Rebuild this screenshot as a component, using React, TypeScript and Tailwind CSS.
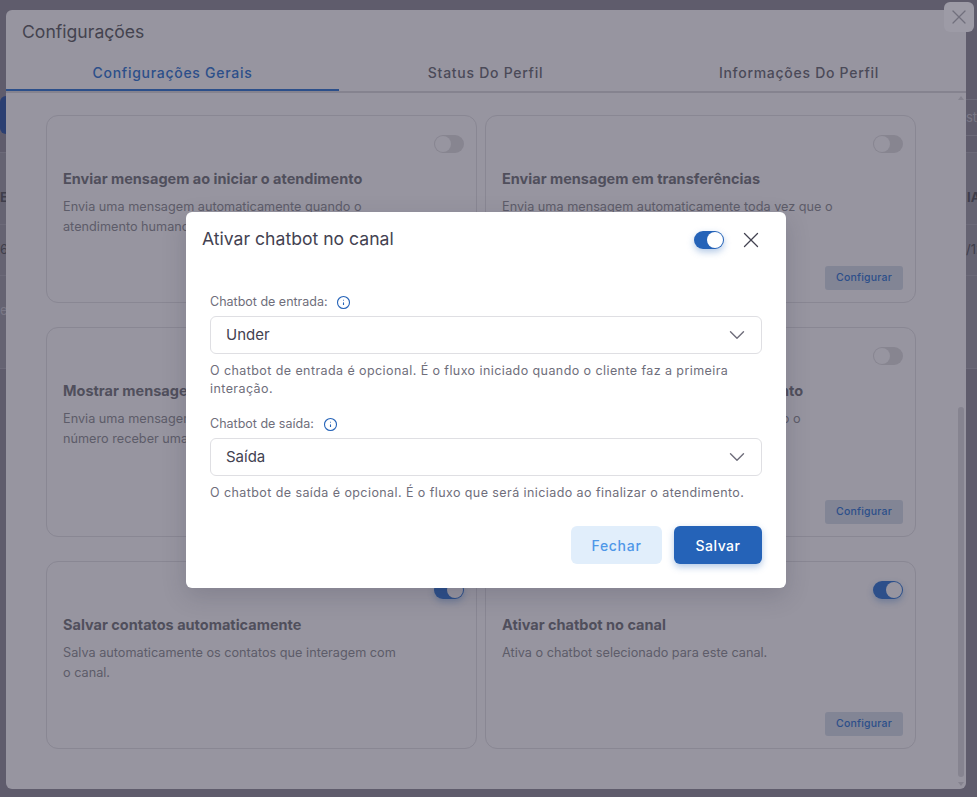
import { ChevronDown, X } from 'lucide-react';

const cards = [
  { title: 'Enviar mensagem ao iniciar o atendimento', text: 'Envia uma mensagem automaticamente quando o atendimento humano for iniciado no canal.', on: false, config: false },
  { title: 'Enviar mensagem em transferências', text: 'Envia uma mensagem automaticamente toda vez que o atendimento for transferido.', on: false, config: true },
  { title: 'Mostrar mensagem automática ao receber ligação', text: 'Envia uma mensagem automaticamente quando o número receber uma ligação.', on: false, config: false, tall: true },
  { title: 'Enviar mensagem ao finalizar atendimento', text: 'Envia uma mensagem automaticamente quando o atendimento for encerrado.', on: false, config: true, tall: true },
  { title: 'Salvar contatos automaticamente', text: 'Salva automaticamente os contatos que interagem com o canal.', on: true, config: false },
  { title: 'Ativar chatbot no canal', text: 'Ativa o chatbot selecionado para este canal.', on: true, config: true },
];

function Toggle({ on, dim }: { on: boolean; dim?: boolean }) {
  if (!on) {
    return (
      <div className="flex h-[18px] w-[30px] items-center rounded-full bg-[#878590] px-[1px]">
        <div className="size-4 rounded-full bg-[#9795a0]" />
      </div>
    );
  }
  return (
    <div className={`flex h-[18px] w-[30px] items-center justify-end rounded-full px-[1px] ${dim ? 'bg-[#2c4f8a] shadow-[0_3px_6px_rgba(44,79,138,0.35)]' : 'bg-[#2563b8] shadow-[0_3px_7px_rgba(37,99,184,0.35)]'}`}>
      <div className={`size-4 rounded-full ${dim ? 'bg-[#9795a0]' : 'bg-white'}`} />
    </div>
  );
}

function Card({ card }: { card: (typeof cards)[number] }) {
  return (
    <div className={`relative flex flex-col rounded-xl border border-[#898793] pt-[19px] pr-[12px] pl-4 ${card.tall ? 'h-[210px]' : 'h-[188px]'}`}>
      <div className="flex justify-end">
        <Toggle on={card.on} dim />
      </div>
      <h3 className="mt-[15px] text-[14.5px] leading-[22px] font-bold text-[#504f5c]">{card.title}</h3>
      <p className="mt-[7px] w-[340px] text-[12.7px] leading-[20px] text-[#5d5c69]">{card.text}</p>
      {card.config && (
        <button className="absolute right-[12px] bottom-[12px] h-6 w-[78px] rounded-[3px] bg-[#828595] text-[10.5px] font-medium tracking-[0.2px] text-[#2c4f8a]">
          Configurar
        </button>
      )}
    </div>
  );
}

function InfoIcon({ className }: { className: string }) {
  return (
    <svg width="15" height="15" viewBox="0 0 15 15" fill="none" stroke="#2563b8" className={className}>
      <circle cx="7.5" cy="7.5" r="6" strokeWidth="1.1" />
      <path d="M7.5 7.4v2.6" strokeWidth="1.1" />
      <path d="M7.5 4.8v.8" strokeWidth="1" />
    </svg>
  );
}

function Field({ label, value, help, labelGap }: { label: string; value: string; help: string; labelGap: string }) {
  return (
    <div>
      <div className="flex h-[20px] items-center text-[12.5px] text-[#6f6e7b]">
        <span>{label}</span>
        <InfoIcon className={labelGap} />
      </div>
      <div className="mt-[4px] flex h-[38px] items-center justify-between rounded-md border border-[#dfdfe3] pr-[11px] pl-[15px] text-[15px] text-[#434251]">
        <span>{value}</span>
        <ChevronDown size={26} strokeWidth={1.3} className="text-[#6f6e7b]" />
      </div>
      <p className="mt-[8px] text-[12.5px] leading-[18px] tracking-[0.42px] text-[#6f6e7b]">{help}</p>
    </div>
  );
}

// what is left visible of the page behind the settings modal
function BehindPage() {
  return (
    <div className="absolute inset-0 flex justify-between text-[13px] text-[#3f3e4b]">
      <div className="w-[6px] whitespace-nowrap">
        <div className="h-[96px]" />
        <div className="h-[38px] w-[12px] rounded-l-md bg-[#2b3f72]" />
        <div className="h-[19px] border-b border-[#6c6a79]" />
        <div className="flex h-[72px] items-start border-b border-[#6c6a79] bg-[#656372] pt-[35px] font-bold">EI</div>
        <div className="flex h-[51px] items-center border-b border-[#6c6a79] bg-[#656372]">6</div>
        <div className="flex h-[93px] items-start border-b border-[#6c6a79] bg-[#656372] pt-[25px] text-[#7a7886]">er</div>
      </div>
      <div className="w-[11px] whitespace-nowrap">
        <div className="h-[100px] border-b border-[#6c6a79]" />
        <div className="flex h-[36px] items-center border-b border-[#6c6a79] text-[#7a7886]">st</div>
        <div className="h-[17px] border-b border-[#6c6a79]" />
        <div className="flex h-[72px] items-start border-b border-[#6c6a79] bg-[#656372] pt-[35px] pl-[1px] font-bold">IA</div>
        <div className="flex h-[51px] items-center border-b border-[#6c6a79] bg-[#656372]">/12</div>
        <div className="h-[93px] border-b border-[#6c6a79] bg-[#656372]" />
      </div>
    </div>
  );
}

export default function App() {
  return (
    <div className="relative h-[797px] w-[977px] overflow-hidden bg-[#5f5c6c] font-['Inter','Liberation_Sans',sans-serif]">
      <BehindPage />

      {/* settings modal */}
      <div className="absolute top-[10px] left-[6px] flex h-[779px] w-[960px] flex-col rounded-md bg-[#9795a0]">
        <h2 className="mt-[10px] ml-[16px] text-[17.6px] leading-6 text-[#44434f]">Configurações</h2>
        <div className="mt-[9px] flex h-[40px] border-b-2 border-[#85838f] text-[14px] font-medium tracking-[0.72px]">
          <div className="flex h-[38px] w-[333px] items-center justify-center border-b-2 border-[#2c4f8a] pt-[2px] text-[#2c4f8a]">Configurações Gerais</div>
          <div className="flex h-[38px] w-[293px] items-center justify-center border-b-2 border-transparent pt-[2px] text-[#4b4a58]">Status Do Perfil</div>
          <div className="flex h-[38px] w-[334px] items-center justify-center border-b-2 border-transparent pt-[2px] text-[#4b4a58]">Informações Do Perfil</div>
        </div>
        <div className="relative flex-1 overflow-hidden">
          <div className="mt-[22px] ml-[40px] grid w-[870px] grid-cols-2 gap-x-2 gap-y-6">
            {cards.map((card) => (
              <Card key={card.title} card={card} />
            ))}
          </div>
          {/* scrollbar */}
          <div className="absolute top-[3px] right-[2px] h-0 w-0 border-x-[3px] border-b-[4px] border-x-transparent border-b-[#85838f]" />
          <div className="absolute top-[314px] right-[2px] bottom-[12px] w-[6px] rounded-full bg-[#868490]" />
          <div className="absolute right-[2px] bottom-[3px] h-0 w-0 border-x-[3px] border-t-[4px] border-x-transparent border-t-[#85838f]" />
        </div>
      </div>

      <button className="absolute top-[2px] left-[944px] flex size-[30px] items-center justify-center rounded-md bg-[#9d9ba6] text-[#71707d]">
        <X size={24} strokeWidth={1.2} />
      </button>

      {/* chatbot dialog */}
      <div className="absolute top-[212px] left-[186px] h-[376px] w-[600px] rounded-md bg-white shadow-[0_8px_24px_rgba(40,40,60,0.18)]">
        <div className="flex h-[39px] items-end justify-between pr-[22px] pl-[16px]">
          <h2 className="text-[17.6px] leading-6 text-[#434251]">Ativar chatbot no canal</h2>
          <div className="flex h-[26px] translate-y-[2px] items-center gap-[14px]">
            <Toggle on />
            <X size={26} strokeWidth={1.2} className="text-[#434251]" />
          </div>
        </div>
        <div className="mt-[41px] flex flex-col gap-[16px] px-[24px]">
          <Field
            label="Chatbot de entrada:"
            labelGap="ml-[8px]"
            value="Under"
            help="O chatbot de entrada é opcional. É o fluxo iniciado quando o cliente faz a primeira interação."
          />
          <Field
            label="Chatbot de saída:"
            labelGap="ml-[9px]"
            value="Saída"
            help="O chatbot de saída é opcional. É o fluxo que será iniciado ao finalizar o atendimento."
          />
        </div>
        <div className="mt-[24px] flex justify-end gap-3 px-[24px]">
          <button className="h-[38px] w-[91px] rounded-md bg-[#e1eefb] text-[14px] font-medium tracking-[0.7px] text-[#4f97e8]">Fechar</button>
          <button className="h-[38px] w-[88px] rounded-md bg-[#2563b8] text-[14px] font-medium tracking-[0.5px] text-white shadow-[0_3px_7px_rgba(37,99,184,0.35)]">Salvar</button>
        </div>
      </div>
    </div>
  );
}
